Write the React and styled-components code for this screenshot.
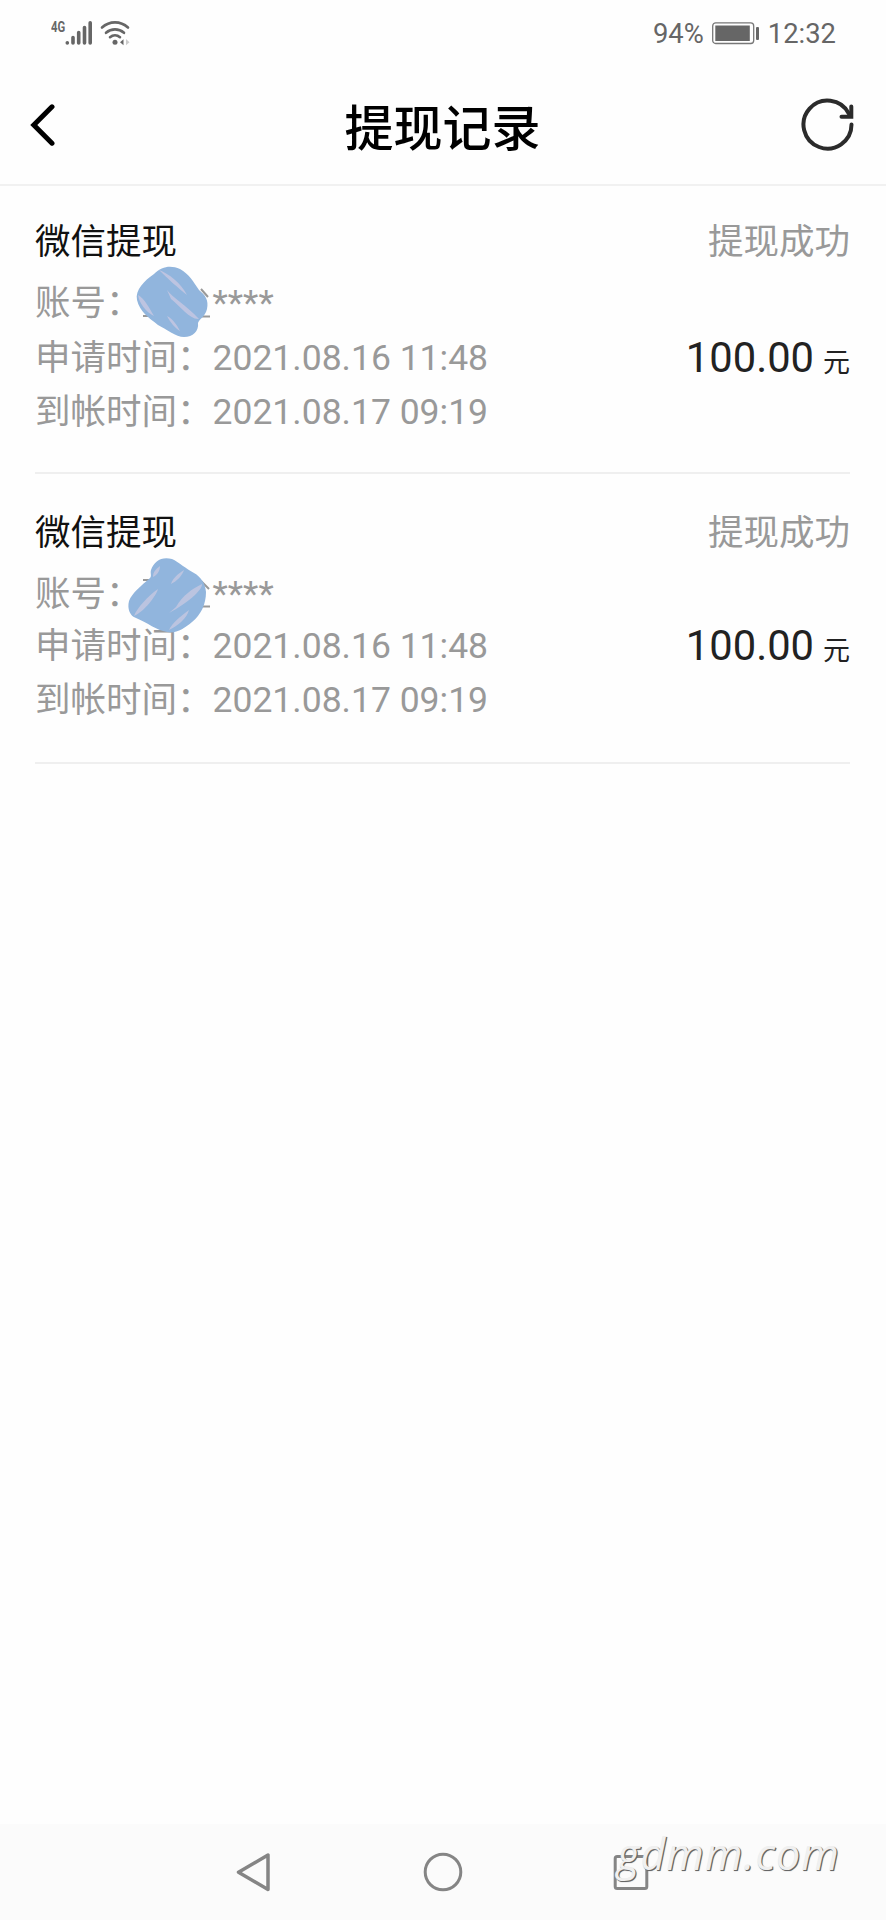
import React from 'react';
import styled, { createGlobalStyle } from 'styled-components';

const GlobalStyle = createGlobalStyle`
  * {
    box-sizing: border-box;
  }
  body {
    margin: 0;
    background: #fefefe;
    font-family: Roboto, 'Noto Sans CJK SC', sans-serif;
  }
`

const Screen = styled.div`
  display: flex;
  flex-direction: column;
  width: 886px;
  height: 1920px;
  overflow: hidden;
  background: #fefefe;
`

const StatusBar = styled.div`
  display: flex;
  justify-content: space-between;
  align-items: center;
  height: 66px;
  padding: 0 50px 0 51px;
  color: #666;
  font-size: 27.4px;
`

const StatusGroup = styled.div`
  display: flex;
  align-items: center;
  gap: 8px;
`

const StatusText = styled.span`
  padding-top: 2px;
`

const Network = styled.span`
  align-self: flex-start;
  width: 14px;
  margin-right: -8px;
  font-size: 15.5px;
  font-weight: 700;
  line-height: 14px;
  transform: scaleX(0.73);
  transform-origin: left;
`

const Header = styled.header`
  display: grid;
  grid-template-columns: 120px 1fr 120px;
  align-items: center;
  height: 120px;
  padding: 0 31px 0 30px;
  border-bottom: 2px solid #f1f1f1;
`

const Title = styled.h1`
  margin: 0;
  padding-top: 9px;
  color: #000;
  font-size: 49px;
  font-weight: 500;
  line-height: 60px;
  text-align: center;
`

const IconButton = styled.button`
  display: flex;
  justify-self: ${props => props.$end ? 'end' : 'start'};
  padding: 0;
  border: 0;
  background: none;
`

const RecordList = styled.ul`
  flex: 1;
  margin: 0;
  padding: 0 36px 0 35px;
  list-style: none;
`

const Record = styled.li`
  display: grid;
  grid-template-columns: 1fr auto;
  grid-template-rows: ${props => props.$tight ? '72px 50px 54px 54px' : '73px 50px 60px 48px'};
  align-items: center;
  height: ${props => props.$tight ? 290 : 288}px;
  padding-top: ${props => props.$tight ? 23 : 19}px;
  border-bottom: 2px solid #efefef;
  color: #999;
  font-size: 35.5px;
  line-height: 50px;
  white-space: nowrap;
`

const Kind = styled.span`
  color: #111;
`

const Status = styled.span`
  justify-self: end;
`

const Line = styled.span`
  grid-column: 1;
`

const Masked = styled.span`
  position: relative;
  display: inline-block;
  width: 71px;
  height: 50px;
  vertical-align: top;
`

const Scribble = styled.svg`
  position: absolute;
  left: ${props => props.$left}px;
  top: ${props => props.$top}px;
  overflow: visible;
`

const Amount = styled.span`
  padding-top: 4px;
  color: #222;
  font-size: 41.7px;
  text-align: right;
`

const Unit = styled.small`
  margin-left: 9px;
  font-size: 27px;
`

const NavBar = styled.nav`
  position: relative;
  display: flex;
  justify-content: center;
  align-items: center;
  gap: 148px;
  height: 96px;
  background: #fbfbfb;
`

const Watermark = styled.span`
  position: absolute;
  left: 617px;
  top: 3px;
  color: #f0f0f0;
  font-family: 'Open Sans', sans-serif;
  font-size: 43px;
  font-style: italic;
  line-height: 54px;
  letter-spacing: 1.1px;
  text-shadow: 1px 1px 0 #666, 1px 1px 1px #666;
`

const records = [
  { id: 1, applied: '2021.08.16 11:48', arrived: '2021.08.17 09:19', amount: '100.00' },
  { id: 2, applied: '2021.08.16 11:48', arrived: '2021.08.17 09:19', amount: '100.00' },
];

const SignalIcon = () => (
  <svg width="27" height="26" viewBox="0 0 27 26" stroke="#666" strokeWidth="3.6" strokeLinecap="round">
    <path d="M2.3 22.8v.2M8 17.5V23M13.700 12.500V23M19.500 7.500V23M25.200 2.800V23" />
  </svg>
)

const WifiIcon = () => (
  <svg width="31" height="26" viewBox="0 0 31 26" fill="none" stroke="#666" strokeWidth="2.6" strokeLinecap="round">
    <path d="M2 7.500C9.500.6 20.500.6 28 7.500M6 12.800c5.300-4.600 12.700-4.600 18 0M10 17.200c3-2.500 7-2.500 10 0" />
    <circle cx="15" cy="22.3" r="2.5" fill="#666" stroke="none" />
    <path d="M20 22.200l3.500-3v6z" fill="#666" stroke="none" />
    <path d="M26 19l3.500 3.200-3.500 3z" fill="#ccc" stroke="none" />
  </svg>
)

const BatteryIcon = () => (
  <svg width="48" height="23" viewBox="0 0 48 23">
    <rect x=".7" y=".9" width="41" height="20.6" rx="3" fill="none" stroke="#777" strokeWidth="1.3" />
    <rect x="3.3" y="3.5" width="34.5" height="15.5" fill="#666" />
    <rect x="44" y="5" width="3" height="13" rx="1" fill="#666" />
  </svg>
)

const BackIcon = () => (
  <svg width="26" height="42" viewBox="0 0 26 42" fill="none" stroke="#000" strokeWidth="5" strokeLinecap="round">
    <path d="M22 2.800L3.800 21 22 39.200" />
  </svg>
)

const RefreshIcon = () => (
  <svg width="54" height="54" viewBox="0 0 54 54" fill="none" stroke="#2b2b2b" strokeWidth="4" strokeLinecap="round">
    <path d="M50.500 26.500A24 24 0 1 1 47.800 15.500" />
    <path d="M50.300 8.500v10.200H40.500" />
  </svg>
)

// Marker strokes that hide the account, with the bits of text still sticking out
const ScribbleOne = () => (
  <Scribble $left={-6} $top={-12} width="73" height="72" viewBox="0 0 73 72">
    <path d="M7 50h10M62 50.500h12M65 23l7 8" fill="none" stroke="#999" strokeWidth="2" />
    <path d="M18 8C26 0 35-1 44 3c9 5 13 12 19 21 6 5 10 10 8 19-2 8-7 9-9 14 1 8-5 14-14 14-8 0-18-8-26-12C12 51 4 46 1 34c-2-10 7-19 17-26z" fill="#91b5dd" />
    <path d="M23 4c9 3 23 14 28 25C42 22 31 12 23 4zM31 24c6 8 19 15 32 29-9 1-19-13-28-20zM2 29c6 3 12 14 16 21C10 46 3 37 2 29zM31 50c6 3 10 9 13 15-5-3-10-9-13-15z" fill="#bdc4e1" />
  </Scribble>
)

const ScribbleTwo = () => (
  <Scribble $left={-14} $top={-12} width="80" height="77" viewBox="0 0 80 77">
    <path d="M15 23h10M70 49.500h12M73 24l8 8" fill="none" stroke="#999" strokeWidth="2" />
    <path d="M23 13C26 4 34-1 44 2c7 3 14 10 22 14 7 4 11 10 12 19 0 12-5 23-14 30-7 6-16 12-25 10C28 73 20 66 8 61 2 59-1 52 1 44c3-8 12-15 21-23 2-2 0-5 1-8z" fill="#91b5dd" />
    <path d="M6 59c3-8 14-20 24-27-2 7-13 22-24 27zM43 27c2-6 7-10 13-14-2 6-7 11-13 14zM48 50c7-12 16-18 26-23 1 6-16 20-33 29zM41 73c3-7 11-13 20-20-2 8-11 16-20 20zM25 20c0-5 3-8 7-11 0 5-3 9-7 11z" fill="#bbc4e0" />
  </Scribble>
)

const scribbles = [ScribbleOne, ScribbleTwo];

function App() {
  return (
    <>
      <GlobalStyle />
      <Screen>
        <StatusBar>
          <StatusGroup>
            <Network>4G</Network>
            <SignalIcon />
            <WifiIcon />
          </StatusGroup>
          <StatusGroup>
            <StatusText>94%</StatusText>
            <BatteryIcon />
            <StatusText>12:32</StatusText>
          </StatusGroup>
        </StatusBar>
        <Header>
          <IconButton aria-label="返回"><BackIcon /></IconButton>
          <Title>提现记录</Title>
          <IconButton $end aria-label="刷新"><RefreshIcon /></IconButton>
        </Header>
        <RecordList>
          {records.map((record, i) => {
            const Mark = scribbles[i];
            return (
              <Record key={record.id} $tight={i > 0}>
                <Kind>微信提现</Kind>
                <Status>提现成功</Status>
                <Line>账号：<Masked><Mark /></Masked>****</Line>
                <span />
                <Line>申请时间：{record.applied}</Line>
                <Amount>{record.amount}<Unit>元</Unit></Amount>
                <Line>到帐时间：{record.arrived}</Line>
              </Record>
            )
          })}
        </RecordList>
        <NavBar>
          <svg width="40" height="40" viewBox="0 0 40 40" fill="none" stroke="#858585" strokeWidth="3.5" strokeLinejoin="round">
            <path d="M33 3v34.500L3.500 20.200z" />
          </svg>
          <svg width="40" height="40" viewBox="0 0 40 40" fill="none" stroke="#858585" strokeWidth="3">
            <circle cx="20" cy="20" r="17.8" />
          </svg>
          <svg width="40" height="40" viewBox="0 0 40 40" fill="none" stroke="#858585" strokeWidth="3">
            <rect x="4.2" y="4.5" width="31.6" height="32" rx="2" />
          </svg>
          <Watermark>gdmm.com</Watermark>
        </NavBar>
      </Screen>
    </>
  );
}

export default App;
